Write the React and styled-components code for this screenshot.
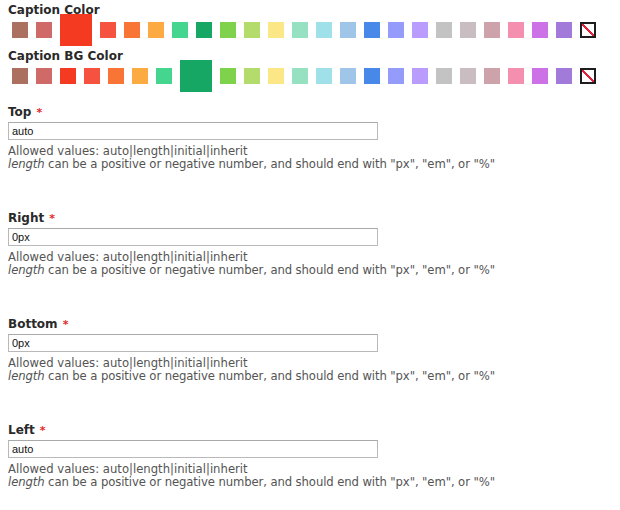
import React from "react";
import styled, { createGlobalStyle } from "styled-components";

const Global = createGlobalStyle`
  html, body { margin: 0; padding: 0; background: #fff; }
  body { font-family: "DejaVu Sans", sans-serif; }
`;

const Page = styled.div`
  display: flex;
  flex-direction: column;
  padding: 1px 8px 0 8px;
  width: 604px;
`;

const Section = styled.div`
  margin-bottom: 6px;
`;

const Label = styled.div`
  font-family: "DejaVu Sans", sans-serif;
  font-weight: bold;
  font-size: 12px;
  line-height: 18px;
  color: #2a2a2a;
`;

const SwatchRow = styled.div`
  display: flex;
  align-items: center;
  height: 22px;
`;

const Swatch = styled.span`
  flex: none;
  display: block;
  width: ${(p) => (p.$big ? 32 : 16)}px;
  height: ${(p) => (p.$big ? 32 : 16)}px;
  margin: 0 4px;
  background: ${(p) => p.$color};
`;

const NoneSwatch = styled.span`
  flex: none;
  display: block;
  width: 16px;
  height: 16px;
  margin: 0 4px;
  box-sizing: border-box;
  border: 2px solid #1d1d1d;
  background: linear-gradient(
    to top right,
    #fff calc(50% - 0.8px),
    #e0203a calc(50% - 0.8px),
    #e0203a calc(50% + 0.8px),
    #fff calc(50% + 0.8px)
  );
`;

const Field = styled.div`
  margin-top: ${(p) => (p.$first ? 10 : 0)}px;
  margin-bottom: 38px;
`;

const FieldLabel = styled.label`
  display: block;
  height: 18px;
  font-family: "DejaVu Sans", sans-serif;
  font-weight: bold;
  font-size: 12px;
  line-height: 18px;
  color: #2a2a2a;
  margin-bottom: 1px;
`;

const Required = styled.span`
  color: #e32a2a;
  font-size: 11px;
  line-height: 1;
  margin-left: 5px;
`;

const Input = styled.input`
  display: block;
  box-sizing: border-box;
  width: 370px;
  height: 18px;
  margin: 0;
  padding: 0 3px;
  border: 1px solid #b9b9b9;
  border-top-color: #a9a9a9;
  background: #fff;
  font-family: "Liberation Sans", Arial, sans-serif;
  font-size: 11px;
  color: #111;
  outline: none;
`;

const Help = styled.div`
  margin-top: 5px;
  font-family: "DejaVu Sans", sans-serif;
  font-size: 11.65px;
  line-height: 13px;
  color: #545454;
`;

const HelpLine = styled.div`
  height: 13px;
  letter-spacing: ${(p) => (p.$tight ? "-0.1px" : "0")};
`;

const captionColors = [
  "#ac7060", "#cf6a68", "#f53a22", "#f5533f", "#f97536", "#fcab43",
  "#44d58f", "#16a764", "#7fd24b", "#b4dc6c", "#fbe785", "#95e1c1",
  "#a0e1e9", "#9fc5e9", "#4888e8", "#959bfa", "#b99cfb", "#c3c3c3",
  "#cabdc1", "#cda2aa", "#f58fb0", "#cd71e6", "#a27ad9",
];

const fields = [
  { name: "Top", value: "auto" },
  { name: "Right", value: "0px" },
  { name: "Bottom", value: "0px" },
  { name: "Left", value: "auto" },
];

function Palette({ selected }) {
  return (
    <SwatchRow>
      {captionColors.map((c, i) => (
        <Swatch key={i} $color={c} $big={i === selected} />
      ))}
      <NoneSwatch />
    </SwatchRow>
  );
}

export default function App() {
  return (
    <>
      <Global />
      <Page>
        <Section>
          <Label>Caption Color</Label>
          <Palette selected={2} />
        </Section>
        <Section>
          <Label>Caption BG Color</Label>
          <Palette selected={7} />
        </Section>
        {fields.map((f, i) => (
          <Field key={f.name} $first={i === 0}>
            <FieldLabel>
              {f.name}
              <Required>*</Required>
            </FieldLabel>
            <Input defaultValue={f.value} />
            <Help>
              <HelpLine>Allowed values: auto|length|initial|inherit</HelpLine>
              <HelpLine $tight>
                <i>length</i> can be a positive or negative number, and should end with "px", "em", or "%"
              </HelpLine>
            </Help>
          </Field>
        ))}
      </Page>
    </>
  );
}
